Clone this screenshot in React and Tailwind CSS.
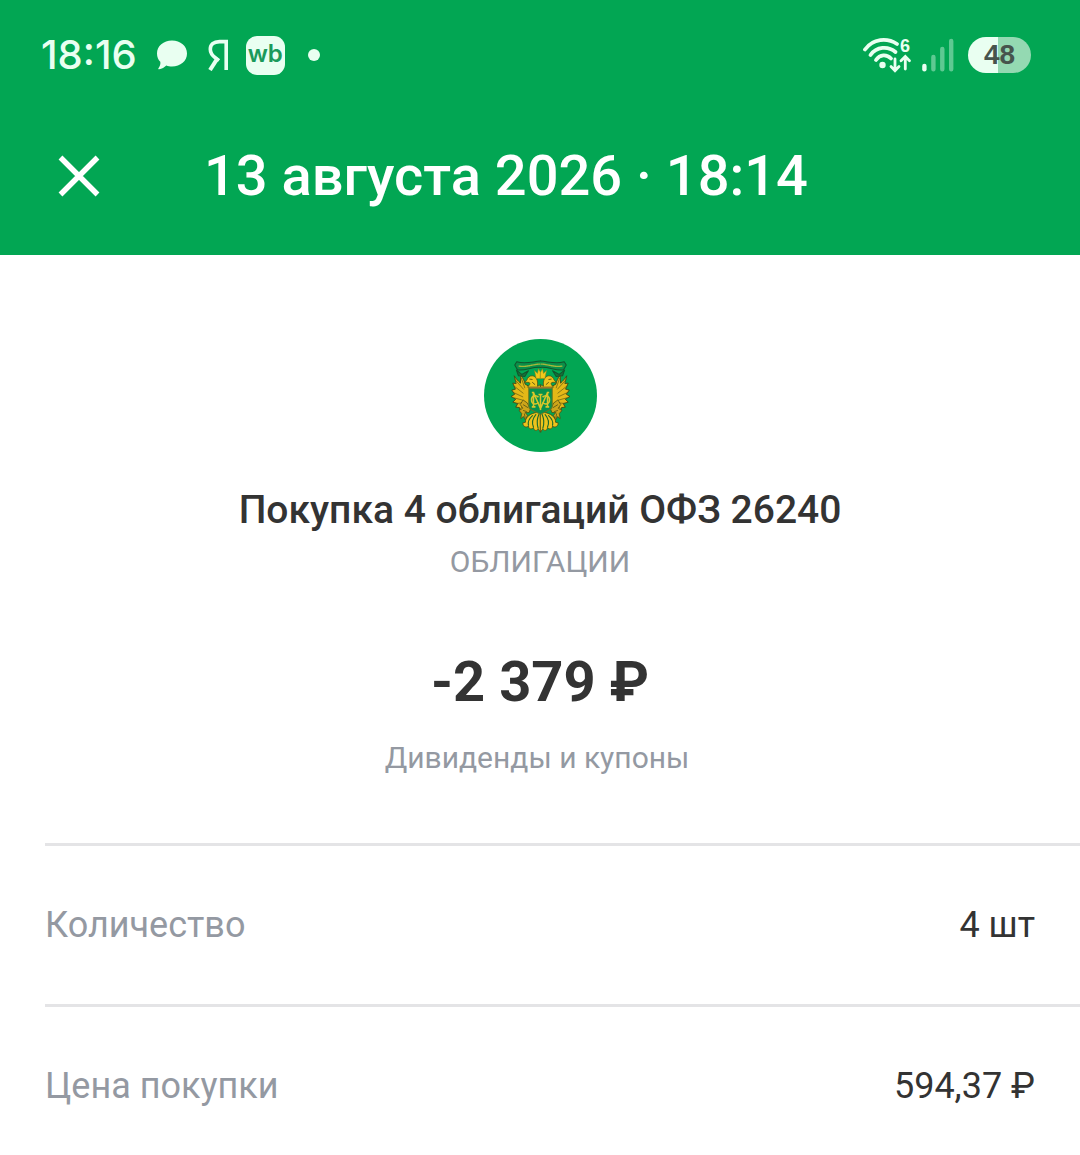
import React from 'react';

const details = [
  { id: 'qty', label: 'Количество', value: '4 шт' },
  { id: 'price', label: 'Цена покупки', value: '594,37 ₽' },
];

export default function App(){
  return (
    <div className="min-h-screen bg-white font-['Roboto',sans-serif] text-[#333333]">
      <header className="bg-[#02a653] text-white">
        <StatusBar />
        <div className="flex items-center h-[145px] px-[57px] pb-[14px]">
          <button type="button" aria-label="Закрыть" className="shrink-0">
            <svg viewBox="0 0 44 44" className="size-[44px]" stroke="currentColor" strokeWidth="5.4" fill="none">
              <path d="M3.5 3.5 L40.5 40.5 M40.5 3.5 L3.5 40.5" />
            </svg>
          </button>
          <h1 className="ml-[103px] text-[56px] leading-[64px] font-medium whitespace-nowrap">13 августа 2026 · 18:14</h1>
        </div>
      </header>

      <main>
        <section className="flex flex-col items-center pt-[84px] text-center">
          <Emblem />
          <h2 className="mt-[34px] text-[39px] leading-[48px] font-medium">Покупка 4 облигаций ОФЗ 26240</h2>
          <p className="mt-[8px] text-[30px] leading-[40px] text-[#9499a2]">ОБЛИГАЦИИ</p>
          <p className="mt-[64px] text-[56px] leading-[72px] font-bold">-2 379 ₽</p>
          <p className="mt-[20px] pr-[6px] text-[30px] leading-[40px] text-[#9499a2]">Дивиденды и купоны</p>
        </section>

        <dl className="mt-[65px] ml-[45px]">
          {details.map(d => (
            <div key={d.id} className="flex items-center justify-between h-[161px] pr-[45px] border-t-3 border-[#e4e4e6] text-[36px] leading-[48px]">
              <dt className="text-[#9499a2]">{d.label}</dt>
              <dd>{d.value}</dd>
            </div>
          ))}
        </dl>
      </main>
    </div>
  );
}

function StatusBar(){
  return (
    <div className="flex items-center justify-between h-[110px] pl-[41px] pr-[49px] text-[#e9fff1]">
      <div className="flex items-center">
        <span className="text-[40px] leading-[40px] font-medium font-['Inter',sans-serif]">18:16</span>
        <svg viewBox="0 0 30 30" className="ml-[20px] size-[30px]" fill="currentColor">
          <path d="M15 .5 C23.5 .5 30 6 30 13.5 S23.5 26.5 15 26.5 C12.7 26.5 11.2 26.2 9.3 25.4 C7.4 27.3 4.8 28.9 2.2 29.2 C1.2 29.3 1 28.6 1.6 27.9 C3 26.2 3.7 23.9 3.3 21.8 C1.3 19.8 0 17 0 13.5 C0 6 6.5 .5 15 .5Z" />
        </svg>
        <svg viewBox="0 0 22 32" className="ml-[20px] w-[22px] h-[32px]" fill="none" stroke="currentColor" strokeWidth="3.6">
          <path d="M21 2.6 H12.5 C6.5 2.6 3.3 5.7 3.3 10.3 C3.3 14 5 16.3 8.3 18.8 L12 21.6 M19.2 1 V31" />
          <path d="M10.8 18.8 L3 31" strokeWidth="4" />
        </svg>
        <span className="ml-[17px] flex items-center justify-center size-[39px] rounded-[11px] bg-[#e9fff1] pb-[2px] text-[24px] leading-[28px] font-semibold font-['Inter',sans-serif] text-[#1b9a5b]">wb</span>
        <span className="ml-[23px] size-[12px] rounded-full bg-[#e9fff1]" />
      </div>

      <div className="flex items-center">
        <Wifi />
        <svg viewBox="0 0 32 34" className="ml-[7px] w-[32px] h-[34px]" stroke="currentColor" strokeWidth="4.4" strokeLinecap="round">
          <path d="M2.4 28 V31.3" />
          <path d="M11.4 19 V31.3 M20.3 11 V31.3 M29.2 3 V31.3" opacity=".4" />
        </svg>
        <span className="ml-[14px] flex items-center justify-center w-[63px] h-[36px] rounded-full bg-linear-to-r from-[#e9fff1] from-47% to-[#94d9b2] to-47% text-[28px] leading-[32px] font-bold font-['Liberation_Sans',sans-serif] text-[#46544d]">48</span>
      </div>
    </div>
  );
}

function Wifi(){
  return (
    <svg viewBox="0 -5 52 46" className="w-[52px] h-[46px]" fill="none" stroke="currentColor" strokeWidth="3.8" strokeLinecap="round">
      <path d="M2 12.5 C10 1.5 24 .5 34 7" />
      <path d="M7.5 18 C13.5 9.5 25 8.7 32.5 15" />
      <path d="M13 23 C17 17.3 23.5 17 28 21.5" />
      <circle cx="19.5" cy="28" r="3.2" fill="currentColor" stroke="none" />
      <path d="M32 22 V33 M28 29.5 L32 33.7 L36 29.5 M42.3 32 V20 M38 23.7 L42.3 19.5 L46.5 23.7" strokeWidth="2.8" />
      <text x="37" y="14.5" fontSize="18" fontWeight="700" fontFamily="Liberation Sans, sans-serif" fill="currentColor" stroke="none">6</text>
    </svg>
  );
}

// one half of the double-headed eagle, mirrored around x = 196
function EagleHalf(){
  return (
    <g strokeLinejoin="round" strokeLinecap="round">
      <path d="M196 94 C170 96 150 104 125 96 L119 106 L127 120 C150 124 170 111 196 113" fill="#0b8f49" stroke="#12542c" strokeWidth="3" />
      <path d="M132 109 C155 113 175 103 196 103" fill="none" stroke="#a5b93a" strokeWidth="4" strokeDasharray="3 2" />
      <path d="M124 121 L140 134 L160 123 L149 140 L130 138 Z" fill="#16713a" stroke="#12542c" strokeWidth="3" />
      <path d="M118 139 C123 148 130 154 136 160 L137 137 C144 145 148 153 150 163 L166 172 V220 C159 235 148 244 136 246 L133 233 L122 232 L128 221 L113 217 L122 208 L108 200 L119 193 L110 181 L121 178 L113 160 L122 161 Z" fill="#e4b817" stroke="#3e4414" strokeWidth="2.6" />
      <path d="M120 150 L145 178 M116 168 L144 190 M113 187 L143 201 M117 204 L143 211 M124 221 L148 218 M139 146 L149 174 M136 236 L155 220" fill="none" stroke="#5c5a14" strokeWidth="2" />
      <path d="M187 168 C190 151 182 139 171 138 C163 138 158 143 155 151 L149 157 L162 158 C167 161 163 166 157 172 H196 V166 Z" fill="#efc41c" stroke="#4b4b12" strokeWidth="2.2" />
      <path d="M164 148 L171 149 M172 158 L179 164" stroke="#4b4b12" strokeWidth="2.5" fill="none" />
      <path d="M196 146 H183 L178 122 L187 131 L190 117 L196 128 Z" fill="#f2c81a" stroke="#9a8212" strokeWidth="1.5" />
      <path d="M145 211 L156 219 L166 237 L162 248 L150 248 L157 256 L151 270 L145 260 L137 266 L140 251 L132 242 L143 235 L136 225 Z" fill="#cda51a" stroke="#4b4b12" strokeWidth="2.2" />
      <path d="M145 225 L158 233 M145 242 L154 245 M148 252 L150 264" fill="none" stroke="#4b4b12" strokeWidth="2.2" />
      <path d="M196 246 L178 249 C160 254 150 265 151 277 L143 279 C143 290 154 295 160 288 C160 297 169 300 175 293 C176 303 185 304 189 297 L196 306 Z" fill="#edc31c" stroke="#4b4b12" strokeWidth="2.4" />
      <path d="M191 254 C185 268 185 282 189 295 M182 254 C172 266 170 280 175 291 M172 257 C161 267 158 278 160 286" fill="none" stroke="#1f6b2c" strokeWidth="3.4" />
    </g>
  );
}

function Emblem(){
  return (
    <svg viewBox="27 28 338 338" className="size-[113px]" role="img" aria-label="ОФЗ">
      <circle cx="196" cy="197" r="169" fill="#02a653" />
      <EagleHalf />
      <g transform="translate(392 0) scale(-1 1)"><EagleHalf /></g>
      <path d="M161 174 H231 V230 C231 242 212 243 196 254 C180 243 161 242 161 230 Z" fill="#07914c" stroke="#6b7520" strokeWidth="3" />
      <path d="M163 174 H229" stroke="#ad752f" strokeWidth="4" />
      <g fill="none" stroke="#d8c52a" strokeWidth="4.6">
        <path d="M175 231 V188 L196 236 L217 188 V231 M170 231 H181 M211 231 H222 M170 188 H177 M215 188 H222 M196 194 V240 M190 194 H202" />
        <path d="M190 202 C180 193 169 199 169 210 C169 222 181 227 190 218 M202 202 C212 193 223 199 223 210 C223 222 211 227 202 218" />
      </g>
      <path d="M196 254 V302" stroke="#6c6316" strokeWidth="2" />
    </svg>
  );
}
